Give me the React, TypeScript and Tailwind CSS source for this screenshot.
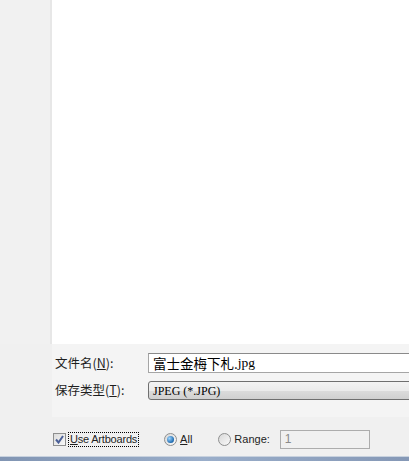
import React from 'react';

const cjk = { fontFamily: '"Noto Sans CJK SC", "Liberation Sans", sans-serif' };
const ui = { fontFamily: '"Liberation Sans", Arial, sans-serif' };
const simsun = { fontFamily: '"Liberation Serif", "Noto Sans CJK SC", serif' };

function Checkbox() {
  return (
    <span className="w-[13px] h-[13px] shrink-0 border border-[#8e8f8f] bg-gradient-to-br from-[#dcdcdc] to-[#f8f8f8] flex items-center justify-center">
      <svg width="9" height="9" viewBox="0 0 9 9">
        <path d="M1 4.5 L3.5 7.5 L8 1" fill="none" stroke="#4a5f97" strokeWidth="2" />
      </svg>
    </span>
  );
}

function Radio({ checked }: { checked?: boolean }) {
  return (
    <span className="w-[13px] h-[13px] shrink-0 rounded-full border border-[#8e8f8f] bg-gradient-to-br from-[#d8d8d8] to-[#fafafa] flex items-center justify-center">
      {checked && (
        <span className="w-[7px] h-[7px] rounded-full bg-[radial-gradient(circle_at_35%_35%,#9fd6ff,#1d6ab0_70%,#0d3f7a)]" />
      )}
    </span>
  );
}

export default function App() {
  return (
    <div className="w-[409px] h-[461px] flex flex-col overflow-hidden text-black">
      <div className="h-[344px] flex">
        <div className="w-[50px] bg-[#f1f1f1]" />
        <div className="w-[2px] bg-[#e7e7e7]" />
        <div className="flex-1 bg-white" />
      </div>

      <div className="h-[73px] flex">
        <div className="w-[52px] shrink-0 bg-[#f0f0f0]" />
        <div className="flex-1 min-w-0 bg-[#f4f4f4] pt-[9px] pl-[3px] flex flex-col gap-[8px] overflow-hidden">
          <div className="flex items-center h-[20px]">
            <span className="w-[93px] shrink-0 whitespace-nowrap text-[12.5px] text-[#1e1e1e]" style={cjk}>
              文件名(<span className="underline">N</span>):
            </span>
            <div className="w-[300px] h-[20px] shrink-0 bg-white border border-[#a5a5a5] border-t-[#8a8a8a] flex items-center pl-[4px] text-[13.5px] whitespace-nowrap" style={cjk}>
              富士金梅下札.<span style={simsun}>jpg</span>
            </div>
          </div>
          <div className="flex items-center h-[19px]">
            <span className="w-[93px] shrink-0 whitespace-nowrap text-[12.5px] text-[#1e1e1e]" style={cjk}>
              保存类型(<span className="underline">T</span>):
            </span>
            <div className="w-[300px] h-[19px] shrink-0 rounded-[3px] border border-[#6f6f6f] bg-[linear-gradient(#f3f3f3,#ebebeb_50%,#dcdcdc_50%,#d0d0d0)] flex items-center pl-[4px] text-[12px] whitespace-nowrap" style={simsun}>
              JPEG (*.JPG)
            </div>
          </div>
        </div>
      </div>

      <div className="h-[39px] bg-[#f0f0f0] flex items-center pl-[53px] pt-[5px] text-[11px] text-[#1e1e1e] whitespace-nowrap" style={ui}>
        <Checkbox />
        <span className="ml-[2px] px-[1px] border border-dotted border-black leading-[13px] tracking-[-0.2px]">
          <span className="underline">U</span>se Artboards
        </span>
        <span className="ml-[25px] flex"><Radio checked /></span>
        <span className="ml-[3px]"><span className="underline">A</span>ll</span>
        <span className="ml-[26px] flex"><Radio /></span>
        <span className="ml-[3px]">Range:</span>
        <div className="ml-[10px] w-[90px] h-[19px] shrink-0 border border-[#acacac] bg-[#f0f0f0] flex items-center pl-[4px] text-[12px] text-[#8a8a8a]">
          1
        </div>
      </div>

      <div className="h-[5px] border-t border-[#c7d1de] bg-[linear-gradient(90deg,#8195b3,#9aaeca_50%,#8598b6)]" />
    </div>
  );
}
